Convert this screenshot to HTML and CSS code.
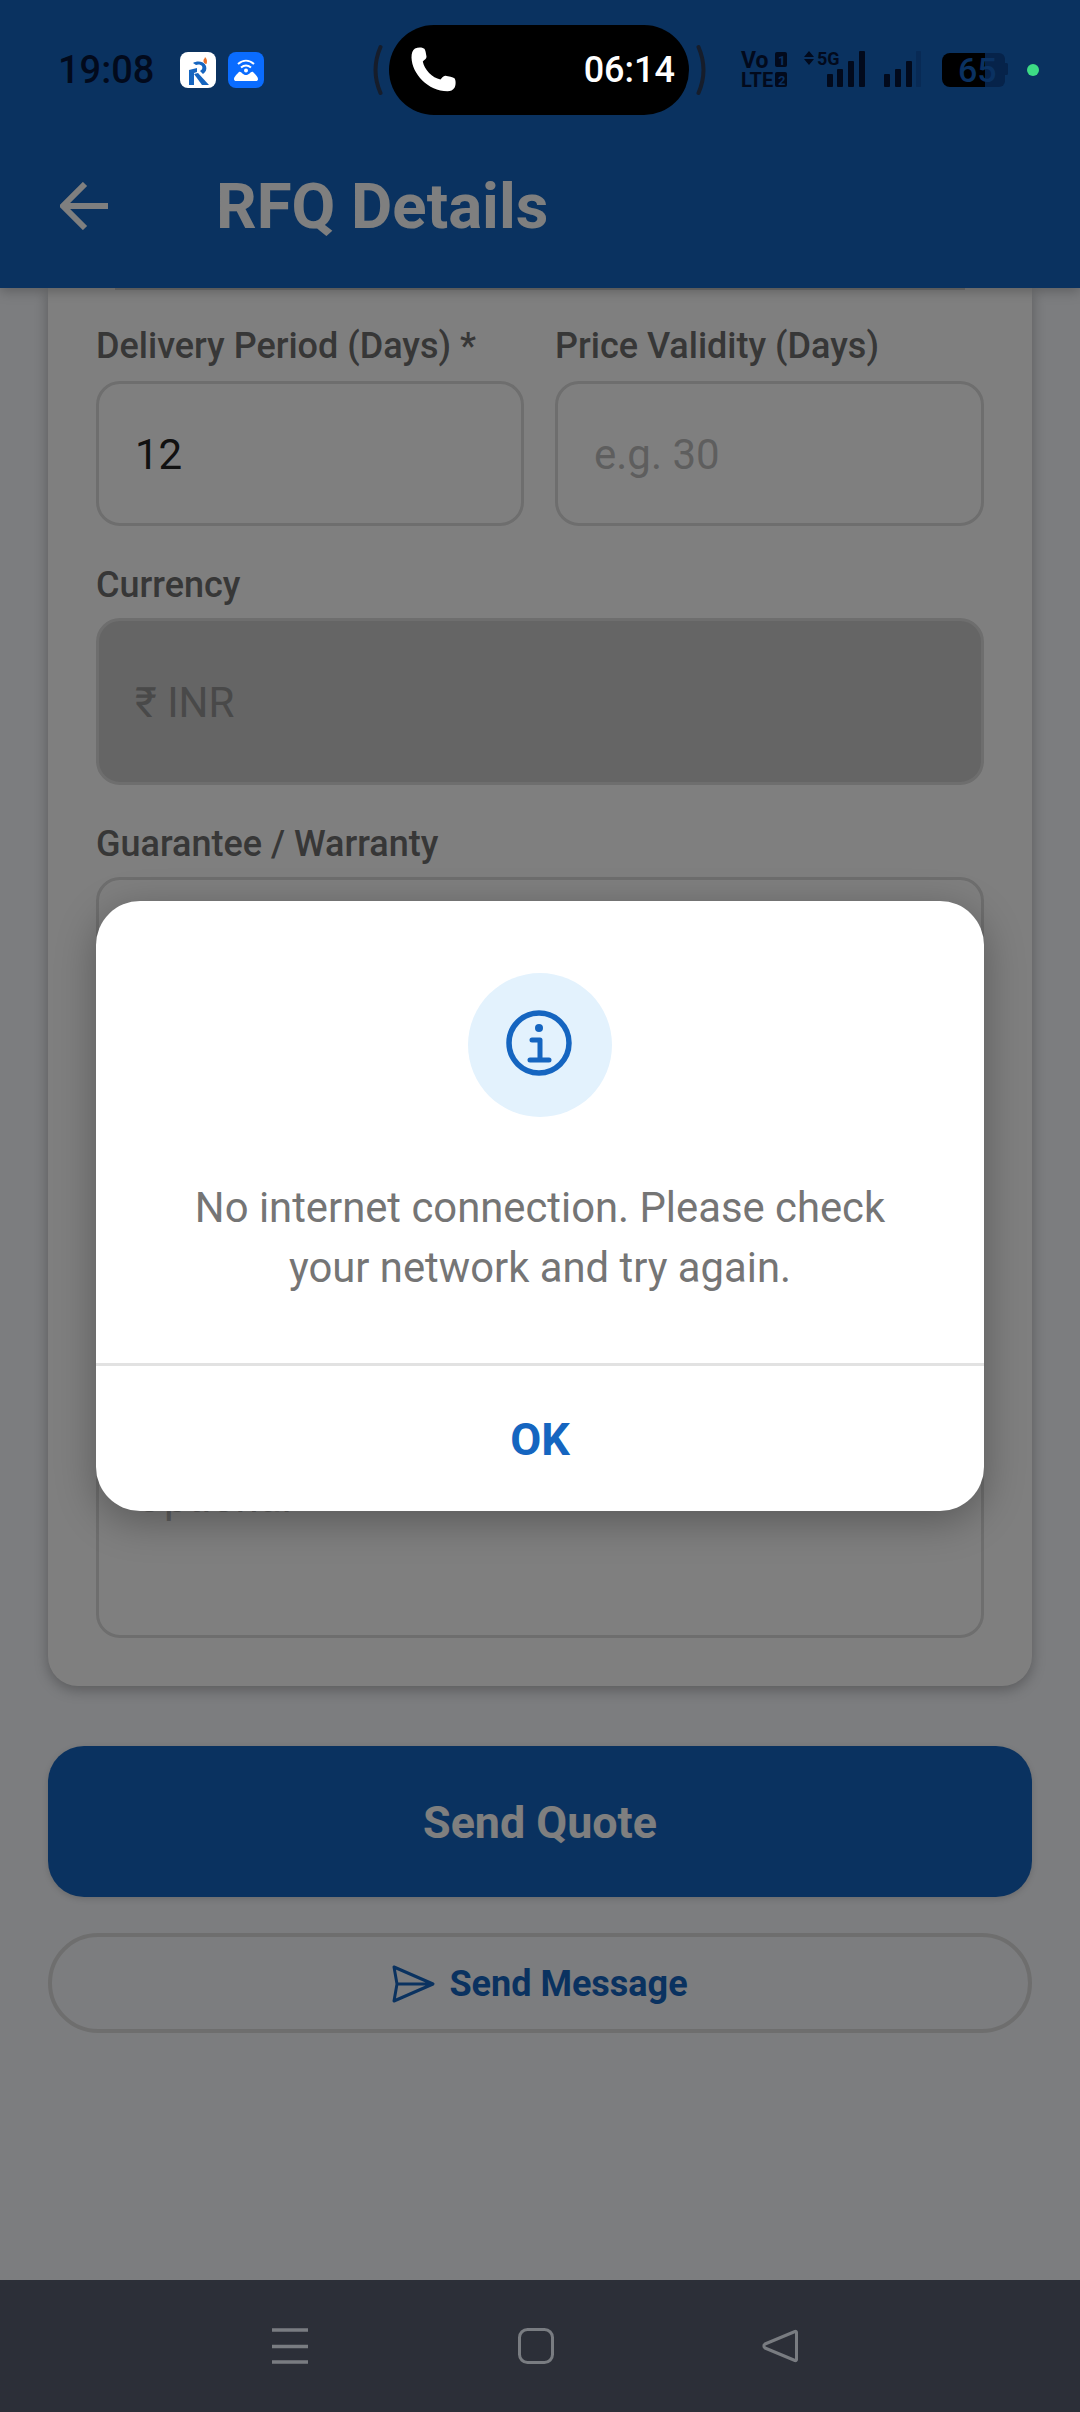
FILE: index.html
```html
<!DOCTYPE html>
<html lang="en">
<head>
<meta charset="utf-8">
<title>RFQ Details</title>
<link rel="stylesheet" href="styles.css">
</head>
<body>
<div class="screen">
  <header class="app-header">
    <div class="status-bar">
      <span class="clock">19:08</span>
      <svg class="app-icon" viewBox="0 0 36 36" aria-hidden="true">
        <rect width="36" height="36" rx="8" fill="#fff"/>
        <path d="M25 5c2 2 2.500 4 1.500 7-2 0-3.500-2-3-4 .5-1 1.200-1.500 1.500-3z" fill="#e8702a"/>
        <path d="M13 11c4-2.500 11-2 13 3 1 3 0 6-3 8l-3-3c2-1 3-3 2-5-1-1.500-4-2-6-1z" fill="#1565c0"/>
        <path d="M9 18l8-2v4l-3 1v12H9z" fill="#1565c0"/>
        <path d="M14 22l4-1 11 12h-7z" fill="#1565c0"/>
      </svg>
      <svg class="app-icon" viewBox="0 0 36 36" aria-hidden="true">
        <rect width="36" height="36" rx="8" fill="#0a6cff"/>
        <path d="M10 12c5-4.500 11-4.500 16 0M13 15.500c3-2.500 7-2.500 10 0" fill="none" stroke="#fff" stroke-width="2"/>
        <circle cx="18" cy="18.500" r="2" fill="#fff"/>
        <path d="M11 20c2-1.500 3.500 3 7 3s5-4.500 7-3c2 2 5 5 5 7 0 1.500-1 2-2 2H8c-1 0-2-.5-2-2 0-2 3-5 5-7z" fill="#fff"/>
      </svg>
      <svg class="call-arc before" viewBox="0 0 11 52" aria-hidden="true"><path d="M8.500 3C2 18 2 34 8.500 49" fill="none" stroke="#161d2b" stroke-width="4" stroke-linecap="round"/></svg>
      <div class="call-pill">
        <svg class="phone" viewBox="0 0 46 46" aria-hidden="true">
          <path d="M4 1.500c3-1.500 7-1.500 9 0 1.500 1 2 5 2.500 8 .3 2-2.200 3.500-3.700 5 1.500 8 9.500 16.500 17.700 18 1.500-1.500 3-4 5-3.700 3 .5 7.500 1.500 9 2.500 1.500 2 1.500 7 0 9.500-1.500 2.500-4 3.500-7 3.500C17 44 1 27 .5 10.500.5 6.500 1.500 3 4 1.500z" fill="#fff"/>
        </svg>
        <span class="call-time">06:14</span>
      </div>
      <svg class="call-arc after" viewBox="0 0 11 52" aria-hidden="true"><path d="M2.500 3C9 18 9 34 2.500 49" fill="none" stroke="#161d2b" stroke-width="4" stroke-linecap="round"/></svg>
      <svg class="sys-icons" viewBox="0 0 268 40" aria-hidden="true">
        <g class="sys-glyph">
          <text x="0" y="19" class="net-lg">Vo</text>
          <text x="0" y="38" class="net-md">LTE</text>
          <rect x="34" y="3" width="12" height="15" rx="2"/>
          <rect x="34" y="23" width="12" height="15" rx="2"/>
          <path d="M68 2l5 6H63zM68 16l5-6H63z"/>
          <text x="76" y="16" class="net-sm">5G</text>
          <rect x="86" y="25" width="6" height="13" rx="1"/>
          <rect x="96" y="20" width="6" height="18" rx="1"/>
          <rect x="107" y="12" width="6" height="26" rx="1"/>
          <rect x="118" y="2" width="6" height="36" rx="1"/>
          <rect x="143" y="25" width="6" height="13" rx="1"/>
          <rect x="154" y="20" width="6" height="18" rx="1"/>
          <rect x="165" y="12" width="6" height="26" rx="1"/>
        </g>
        <text x="37" y="15.500" class="sim-digit">1</text>
        <text x="37" y="35.500" class="sim-digit">2</text>
        <rect x="175" y="2" width="5" height="36" rx="1" fill="#082a55"/>
        <path d="M244 4h14a6 6 0 0 1 6 6v22a6 6 0 0 1-6 6h-14z" fill="#06234a"/>
        <path d="M264 14h1.500a1.500 1.500 0 0 1 1.500 1.500v9a1.500 1.500 0 0 1-1.500 1.500H264z" fill="#06234a"/>
        <path d="M209 4h35v34h-35a8 8 0 0 1-8-8V12a8 8 0 0 1 8-8z" fill="#000"/>
        <text x="217" y="33" class="battery-level">65</text>
      </svg>
      <span class="privacy-dot"></span>
    </div>
    <div class="title-row">
      <svg class="back-arrow" viewBox="0 0 48 48" aria-hidden="true">
        <path d="M48 24H4M25 2L3 24l22 22" fill="none" stroke="#fff" stroke-width="6"/>
      </svg>
      <h1 class="page-title">RFQ Details</h1>
    </div>
  </header>

  <main class="content">
    <section class="form-card">
      <div class="previous-field"></div>
      <div class="two-col">
        <div>
          <div class="field-label">Delivery Period (Days) *</div>
          <div class="input"><span class="value">12</span></div>
        </div>
        <div>
          <div class="field-label">Price Validity (Days)</div>
          <div class="input"><span class="hint">e.g. 30</span></div>
        </div>
      </div>
      <div class="field-label spaced">Currency</div>
      <div class="input locked"><span class="locked-value">₹ INR</span></div>
      <div class="field-label spaced">Guarantee / Warranty</div>
      <div class="input"></div>
      <div class="notes"><span class="hint">Optional</span></div>
    </section>
    <button class="btn-primary">Send Quote</button>
    <button class="btn-outline">
      <svg class="send-icon" viewBox="0 0 44 38" aria-hidden="true">
        <path d="M2 2l39 17L2 36l3-17zM5 19h36" fill="none" stroke="#1565c0" stroke-width="3" stroke-linejoin="round"/>
      </svg>
      <span>Send Message</span>
    </button>
  </main>

  <nav class="nav-bar">
    <svg class="nav-menu" viewBox="0 0 36 36" aria-hidden="true">
      <path d="M0 2h36M0 18.500h36M0 34h36" stroke="#797c81" stroke-width="3.500"/>
    </svg>
    <svg class="nav-home" viewBox="0 0 36 36" aria-hidden="true">
      <rect x="1.500" y="1.500" width="33" height="33" rx="8" fill="none" stroke="#797c81" stroke-width="3"/>
    </svg>
    <svg class="nav-back" viewBox="0 0 36 36" aria-hidden="true">
      <path d="M33 3.500c.8-.5 1.500 0 1.500 1v27c0 1-.7 1.500-1.500 1L3 20c-1.500-1-1.500-3 0-4z" fill="none" stroke="#797c81" stroke-width="3" stroke-linejoin="round"/>
    </svg>
  </nav>

  <div class="scrim">
    <div class="dialog">
      <div class="dialog-body">
        <div class="info-badge">
          <svg class="info-icon" viewBox="0 0 66 66" aria-hidden="true">
            <circle cx="33" cy="33" r="30" fill="none" stroke="#1565c0" stroke-width="5.500"/>
            <circle cx="33" cy="18" r="4" fill="#1565c0"/>
            <path d="M26 30h8v20M24 50h19" fill="none" stroke="#1565c0" stroke-width="5" stroke-linecap="round" stroke-linejoin="round"/>
          </svg>
        </div>
        <p class="dialog-text">No internet connection. Please check your network and try again.</p>
      </div>
      <div class="dialog-action">OK</div>
    </div>
  </div>
</div>
</body>
</html>
```

FILE: styles.css
```css
* { box-sizing: border-box; }

html, body {
  margin: 0;
  padding: 0;
}

body {
  font-family: Roboto, "Noto Sans", sans-serif;
  background: #f8fafe;
}

.screen {
  position: relative;
  width: 1080px;
  height: 2412px;
  overflow: hidden;
  display: flex;
  flex-direction: column;
}

/* Header */
.app-header {
  position: relative;
  height: 288px;
  flex: none;
  padding-top: 25px;
  background: #1565c0;
  box-shadow: 0 3px 12px rgba(0, 0, 0, 0.25);
}

.status-bar {
  position: relative;
  z-index: 3;
  height: 90px;
  display: flex;
  align-items: center;
  padding-left: 58px;
}

.clock {
  width: 122px;
  font-size: 38px;
  font-weight: 500;
  color: #020a1c;
}

.app-icon {
  width: 36px;
  height: 36px;
  margin-right: 12px;
}

.call-arc {
  width: 11px;
  height: 52px;
}

.call-arc.before { margin-left: 96px; margin-right: 6px; }
.call-arc.after { margin-left: 7px; margin-right: 34px; }

.call-pill {
  width: 300px;
  height: 90px;
  border-radius: 45px;
  background: #000;
  display: flex;
  align-items: center;
  justify-content: space-between;
  padding: 0 14px 0 22px;
}

.phone {
  width: 46px;
  height: 46px;
}

.call-time {
  font-size: 36px;
  font-weight: 500;
  color: #fff;
}

.sys-icons {
  width: 268px;
  height: 40px;
  flex: none;
  margin-top: -2px;
  overflow: visible;
}

.sys-glyph {
  fill: #020a1c;
}

.net-lg { font: 700 23px Roboto, sans-serif; }
.net-md { font: 700 20px Roboto, sans-serif; }
.net-sm { font: 700 18px Roboto, sans-serif; }

.sim-digit {
  font: 700 13px Roboto, sans-serif;
  fill: #0a3161;
}

.battery-level {
  font: 500 34px Roboto, sans-serif;
  fill: #0a3161;
}

.privacy-dot {
  width: 12px;
  height: 12px;
  margin-left: 18px;
  border-radius: 50%;
  background: #3ddc84;
  flex: none;
}

.title-row {
  display: flex;
  align-items: center;
  height: 100px;
  margin-top: 41px;
  padding-left: 60px;
}

.back-arrow {
  width: 48px;
  height: 48px;
}

.page-title {
  margin: 0 0 0 108px;
  font-size: 63.5px;
  font-weight: 700;
  color: #fff;
}

/* Scrolling form */
.content {
  flex: 1;
  min-height: 0;
  overflow: hidden;
  padding: 0 48px;
  background: #f8fafe;
}

.form-card {
  height: 1398px;
  padding: 0 48px;
  background: #fff;
  border-radius: 0 0 30px 30px;
  box-shadow: 0 4px 14px rgba(0, 0, 0, 0.28);
}

/* Bottom edge of the field scrolled away under the header */
.previous-field {
  height: 2px;
  margin: 0 19px 33px;
  background: #dcdcdc;
}

.two-col {
  display: grid;
  grid-template-columns: 428px 429px;
  gap: 31px;
}

.field-label {
  height: 44px;
  line-height: 46px;
  margin-bottom: 14px;
  font-size: 36px;
  font-weight: 500;
  color: #6e6e6e;
}

.field-label.spaced {
  margin-top: 36px;
  margin-bottom: 12px;
}

.input {
  height: 145px;
  display: flex;
  align-items: center;
  padding: 2px 36px 0;
  border: 3px solid #dcdcdc;
  border-radius: 24px;
  font-size: 42px;
}

.input.locked {
  height: 167px;
  background: #cacaca;
}

.value { color: #222; }
.hint { color: #bdbdbd; font-size: 42px; }
.locked-value { color: #929292; }

.notes {
  height: 181px;
  margin-top: 435px;
  padding: 13px 36px;
  border: 3px solid #dcdcdc;
  border-radius: 24px;
}

/* Action buttons */
.btn-primary,
.btn-outline {
  display: flex;
  align-items: center;
  justify-content: center;
  width: 984px;
  padding: 2px 0 0;
  font-family: inherit;
  font-weight: 700;
}

.btn-primary {
  height: 151px;
  margin-top: 60px;
  border: 0;
  border-radius: 36px;
  background: #1565c0;
  color: #fff;
  font-size: 44.8px;
  box-shadow: 0 2px 6px rgba(0, 0, 0, 0.15);
}

.btn-outline {
  height: 100px;
  margin-top: 36px;
  gap: 13px;
  border: 4px solid #dcdcdc;
  border-radius: 50px;
  background: transparent;
  color: #1565c0;
  font-size: 36px;
}

.send-icon {
  width: 44px;
  height: 38px;
}

/* System navigation */
.nav-bar {
  position: relative;
  z-index: 3;
  height: 132px;
  flex: none;
  display: flex;
  align-items: center;
  padding: 0 0 1px 272px;
  background: #2c2f38;
}

.nav-bar svg {
  width: 36px;
  height: 36px;
}

.nav-menu { margin-right: 210px; }
.nav-home { margin-right: 208px; }

/* Modal */
.scrim {
  position: absolute;
  inset: 0;
  z-index: 2;
  display: flex;
  align-items: center;
  justify-content: center;
  background: rgba(0, 0, 0, 0.5);
}

.dialog {
  width: 888px;
  height: 610px;
  background: #fff;
  border-radius: 44px;
  overflow: hidden;
  box-shadow: 0 10px 40px rgba(0, 0, 0, 0.3);
  display: flex;
  flex-direction: column;
}

.dialog-body {
  flex: 1;
  display: flex;
  flex-direction: column;
  align-items: center;
  padding-top: 72px;
  border-bottom: 3px solid #e2e2e2;
}

.info-badge {
  width: 144px;
  height: 144px;
  border-radius: 50%;
  background: #e3f2fd;
  display: flex;
  align-items: center;
  justify-content: center;
}

.info-icon {
  width: 66px;
  height: 66px;
  margin: 0 3px 4px 0;
}

.dialog-text {
  margin: 61px 0 0;
  width: 760px;
  font-size: 41.8px;
  line-height: 60px;
  text-align: center;
  color: #757575;
}

.dialog-action {
  height: 145px;
  flex: none;
  display: flex;
  align-items: center;
  justify-content: center;
  padding-top: 2px;
  font-size: 45px;
  font-weight: 700;
  color: #1565c0;
}
```
